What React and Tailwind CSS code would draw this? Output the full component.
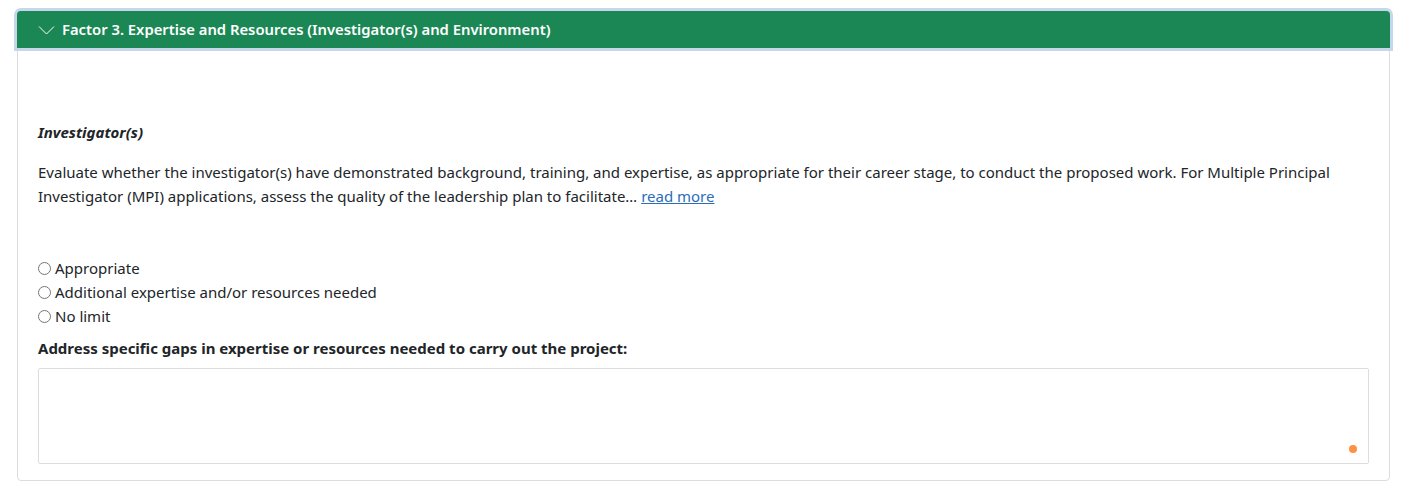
import React, { useState } from 'react';

const OPTIONS = ['Appropriate', 'Additional expertise and/or resources needed', 'No limit'];

export default function App() {
  const [choice, setChoice] = useState('');
  const [notes, setNotes] = useState('');

  return (
    <div className="bg-white min-h-screen pt-[11px] px-[17px] pr-[25px] font-['Noto_Sans',sans-serif] text-[#212529]">
      <div className="border border-[#dcdcdc] rounded-[4px] h-[470px] flex flex-col">
        {/* Header */}
        <div className="bg-[#1b8755] text-white h-[37px] rounded-t-[4px] shadow-[0_0_0_3px_#c5d7ea] flex items-center pl-[21px] gap-[7px] -mx-px -mt-px">
          <svg width="17" height="16" viewBox="0 0 17 16" fill="none" stroke="currentColor" strokeWidth="1">
            <path d="M1 4.5 L8.5 12 L16 4.5" />
          </svg>
          <span className="text-[14.8px] font-semibold">Factor 3. Expertise and Resources (Investigator(s) and Environment)</span>
        </div>

        {/* Body */}
        <div className="px-[20px] pt-[72px] flex flex-col text-[15px]">
          <p className="font-bold italic leading-[24px]">Investigator(s)</p>
          <p className="mt-[16px] leading-[24px]">
            Evaluate whether the investigator(s) have demonstrated background, training, and expertise, as appropriate for their career stage, to conduct the proposed work. For Multiple Principal Investigator (MPI) applications, assess the quality of the leadership plan to facilitate…{' '}
            <a href="#" className="text-[#2a6ebb] underline">read more</a>
          </p>

          <div className="mt-[48px] flex flex-col">
            {OPTIONS.map(o => (
              <label key={o} className="flex items-center gap-[4px] leading-[24px] cursor-pointer">
                <input type="radio" name="factor3" value={o} checked={choice === o} onChange={() => setChoice(o)}
                  className="w-[13px] h-[13px] m-0 accent-[#1b8755]" />
                {o}
              </label>
            ))}
          </div>

          <p className="mt-[8px] font-bold leading-[24px]">Address specific gaps in expertise or resources needed to carry out the project:</p>

          <div className="relative mt-[8px]">
            <textarea value={notes} onChange={e => setNotes(e.target.value)}
              className="block w-full h-[96px] border border-[#dcdcdc] rounded-[2px] resize-none outline-none p-2" />
            <span className="absolute right-[12px] bottom-[11px] w-[8px] h-[8px] rounded-full bg-[#ff9142]" />
          </div>
        </div>
      </div>
    </div>
  );
}
